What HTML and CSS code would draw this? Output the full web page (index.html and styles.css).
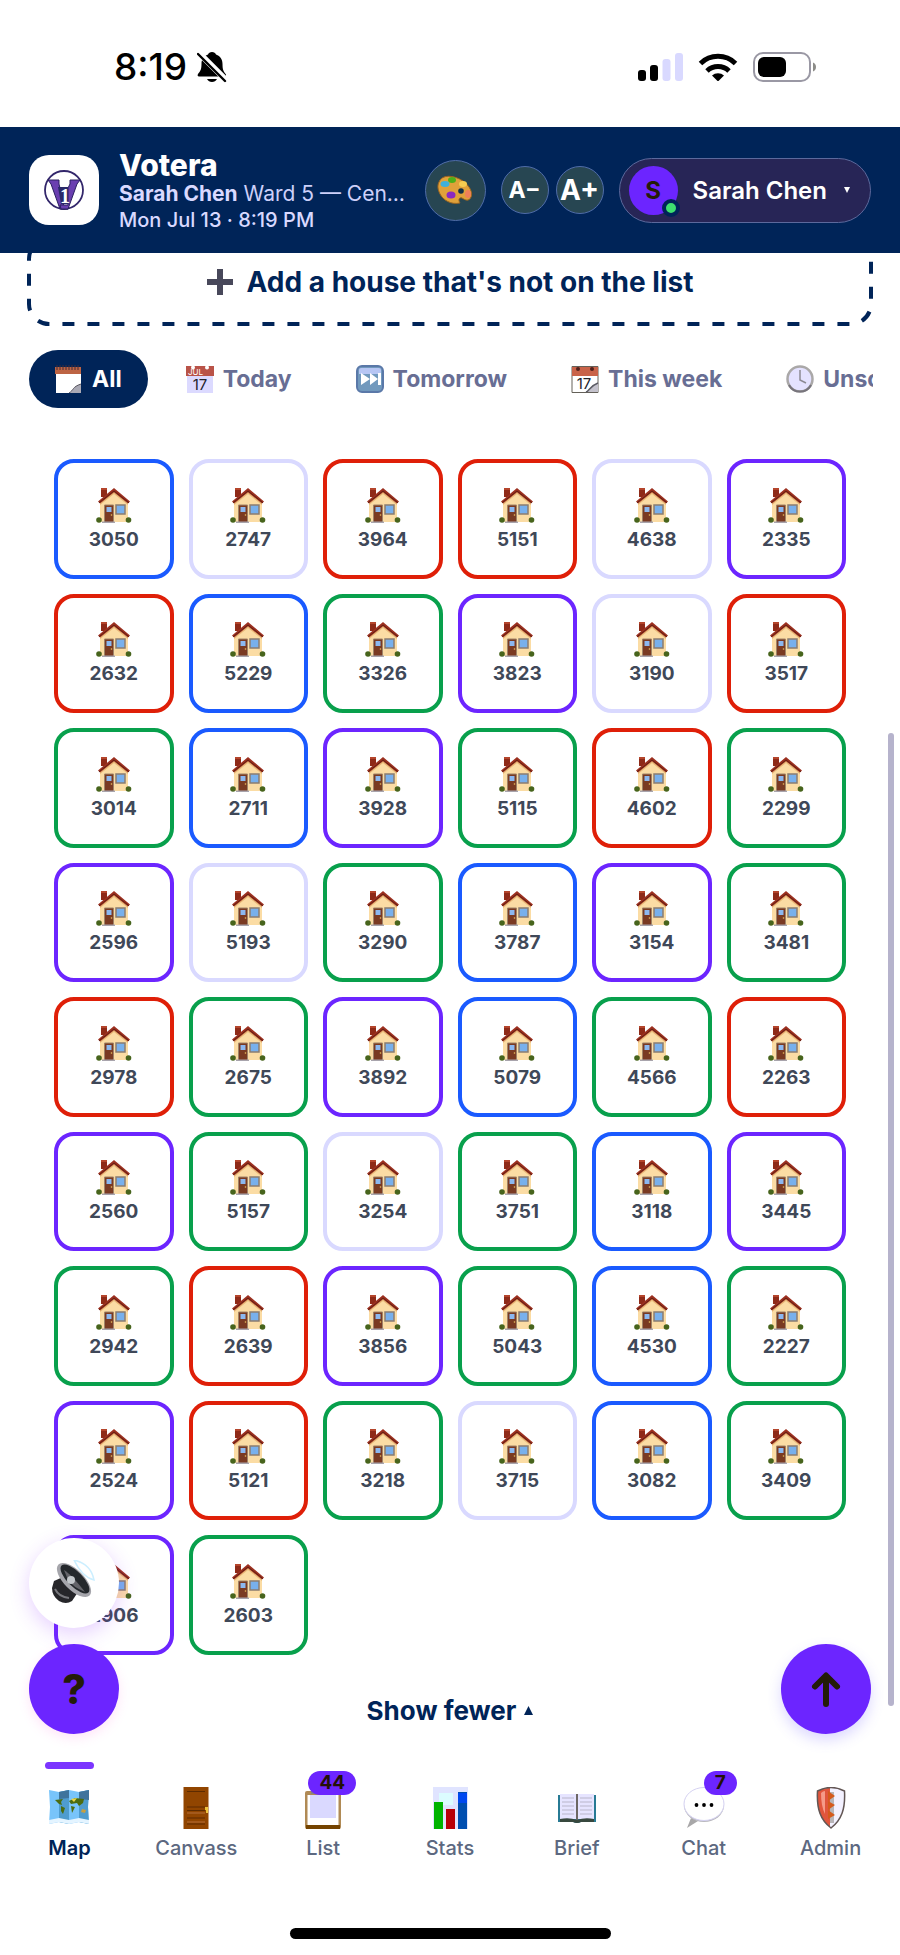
FILE: index.html
```html
<!DOCTYPE html>
<html lang="en">
<head>
<meta charset="utf-8">
<meta name="viewport" content="width=device-width, initial-scale=1">
<title>Votera</title>
<link rel="stylesheet" href="styles.css">
</head>
<body>
<svg class="sprite" aria-hidden="true">
  <symbol id="house" viewBox="0 0 36 36">
    <path d="M5 1h6v9H5z" fill="#8e2a18"/><path d="M5 1h6v2H5z" fill="#b4452c"/>
    <path d="M4 15 18 3l14 12v20H4z" fill="#fbdca4"/>
    <path d="M4 15 18 3l14 12v3L18 7 4 18z" fill="#e8b878"/>
    <path d="M2 14.500 18 1l16 13.500-2 2L18 5.200 4 16.500z" fill="#9c3020"/>
    <path d="M3 15.800 18 4l15 11.800" fill="none" stroke="#642012" stroke-width="1"/>
    <path d="M9 18h8v17H9z" fill="#7a3a22"/><path d="M8.500 35V18h9v17" fill="none" stroke="#a08468"/>
    <path d="M10.500 20h5v5h-5z" fill="#8cb8f0"/><circle cx="15.500" cy="28" r=".8" fill="#e8c060"/>
    <path d="M20 18h9v9h-9z" fill="#78b0ec" stroke="#8a7c70" stroke-width="1.500"/>
    <path d="M6 34.500h13V36H6z" fill="#a8a4ac"/>
    <circle cx="3" cy="33" r="2.800" fill="#47641c"/><circle cx="32.500" cy="33" r="2.800" fill="#47641c"/>
  </symbol>
</svg>

<div class="statusbar">
  <div class="status-left">
    <span class="clock">8:19</span>
    <svg width="30" height="32" viewBox="0 0 30 32" aria-label="Silent mode">
      <path d="M15 1c-2 0-3.500 1-4 2.500C6.500 5 4.500 8.500 4.500 13c0 6-1.500 7.500-3.500 10-.8 1.200-.3 2.500 1 2.500h26c1 0 1.500-1.500.6-2.500-2-2.500-3.100-4-3.100-10 0-4.500-2-8-6.500-9.500C18.500 2 17 1 15 1zM10 28h10c-1 2-2.800 3-5 3s-4-1-5-3z"/>
      <path d="M1 1l29 29" stroke="#fff" stroke-width="6"/><path d="M1 3l27 27" stroke="#000" stroke-width="2.400" stroke-linecap="round"/>
    </svg>
  </div>
  <div class="status-right">
    <svg width="46" height="28" viewBox="0 0 46 28" aria-label="Signal">
      <rect x="1" y="17" width="8" height="11" rx="3"/><rect x="13" y="12" width="8" height="16" rx="3"/>
      <g fill="#d9d9ff"><rect x="25.500" y="6" width="8" height="22" rx="3"/><rect x="38" y="0" width="8" height="28" rx="3"/></g>
    </svg>
    <svg width="40" height="28" viewBox="0 0 40 28" aria-label="Wi-Fi">
      <g fill="none" stroke="#000" stroke-width="5"><path d="M2.500 10.500a25 25 0 0 1 35 0"/><path d="M9 18a16 16 0 0 1 22 0"/></g>
      <path d="M14 22.500a9 9 0 0 1 12 0L20 28.500z"/>
    </svg>
    <svg width="64" height="30" viewBox="0 0 64 30" aria-label="Battery">
      <rect x="1" y="1" width="56" height="28" rx="9" fill="none" stroke="#9a98a4" stroke-width="2"/>
      <rect x="5" y="5" width="28" height="20" rx="6"/><path d="M60 10.500c4 1 4 8 0 9z" fill="#8c8c88"/>
    </svg>
  </div>
</div>

<header class="topbar">
  <div class="logo">
    <svg width="70" height="70" viewBox="0 0 70 70" role="img" aria-label="Votera logo">
      <circle cx="35" cy="35" r="19" fill="#fff" stroke="#33276b" stroke-width="1.800"/>
      <path d="M19 25h11v4l4 17 1 6h5l-1 2h-8L22 29z" fill="#6a3fb0" stroke="#2a2060"/>
      <path d="M51 25H41v4l-2 4v17h-8l1 4h7l9-25z" fill="#6a3fb0" stroke="#2a2060"/>
      <path d="M29 32h10v17h-7z" fill="#2a2a68"/>
      <text x="36" y="48" text-anchor="middle" class="logo-mark">1</text>
    </svg>
  </div>
  <div class="brand">
    <h1>Votera</h1>
    <p class="who"><strong>Sarah Chen</strong> Ward 5 — Cen…</p>
    <p class="when">Mon Jul 13 · 8:19 PM</p>
  </div>
  <button class="round palette" aria-label="Theme">
    <svg width="36" height="30" viewBox="0 0 36 30">
      <path d="M2 7C5-1 17 0 26 6c7 5 10 12 8 16-2 5-6 3-9 1-3-1-4 2-2 5-9 2-17-3-20-9C1 15 0 11 2 7z" fill="#e0a13a" stroke="#9a6420"/>
      <ellipse cx="15" cy="5" rx="4" ry="3" fill="#4caf1a"/><ellipse cx="8" cy="9" rx="4.500" ry="3" fill="#3fb0dc"/>
      <ellipse cx="14" cy="20" rx="4.500" ry="3.500" fill="#8a28c0"/><ellipse cx="26" cy="9" rx="4" ry="3" fill="#f5cc50"/>
      <ellipse cx="31" cy="19" rx="3" ry="4" fill="#f08058"/><circle cx="24" cy="16" r="2.800" fill="#123047"/>
    </svg>
  </button>
  <div class="sizes">
    <button class="round small" aria-label="Smaller text">A−</button>
    <button class="round large" aria-label="Larger text">A+</button>
  </div>
  <button class="profile">
    <span class="avatar">S<i class="online"></i></span>
    <span>Sarah Chen</span>
    <svg class="caret" width="6" height="6" viewBox="0 0 6 6"><path d="M0 0h6L3 6z" fill="#fff"/></svg>
  </button>
</header>

<main>
  <div class="add-wrap">
    <button class="add">
      <svg class="dashes" aria-hidden="true"><rect class="dash-rect" x="2" y="2" rx="20"/></svg>
      <svg width="26" height="26" viewBox="0 0 26 26"><path d="M10 0h6v10h10v6H16v10h-6V16H0v-6h10z" fill="#48485a"/></svg>
      <span>Add a house that's not on the list</span>
    </button>
  </div>

  <div class="chips">
    <button class="chip active">
      <svg width="28" height="28" viewBox="0 0 28 28"><path d="M1 6h25v22H1z" fill="#fff"/><path d="M0 2h26v7H0z" fill="#bd6444"/><path d="M2 0v5M5 0v5M8 0v5M11 0v5M14 0v5M17 0v5M20 0v5M23 0v5" stroke="#442c34"/><path d="M14 28c5-3 3-6 12-9v9z" fill="#aaa9b4"/><path d="M14 28c5-3 3-6 12-9" stroke="#55525c" fill="none"/></svg>
      All</button>
    <button class="chip">
      <svg width="28" height="28" viewBox="0 0 28 28"><path d="M1 10h26v18H1z" fill="#dcdaff"/><path d="M0 1h28v10H0z" fill="#b95348"/><circle cx="7" cy="2.500" r="2" fill="#fff"/><circle cx="21" cy="2.500" r="2" fill="#fff"/><text x="2" y="10" class="cal-month">JUL</text><text x="14" y="25" class="cal-day">17</text></svg>
      Today</button>
    <button class="chip">
      <svg width="28" height="28" viewBox="0 0 28 28"><rect x="1" y="1" width="26" height="26" rx="5" fill="#7199bd" stroke="#5a78a8" stroke-width="2"/><path d="M3 5q0-2 2-2h18q2 0 2 2v4H3z" fill="#b7c6f4"/><path d="M5 8l9 6V8l8 6V8h3v12h-3v-6l-8 6v-6l-9 6z" fill="#fff"/></svg>
      Tomorrow</button>
    <button class="chip">
      <svg width="28" height="28" viewBox="0 0 28 28"><path d="M1 1.500h26v26H1z" fill="#fff" stroke="#646058"/><path d="M1 2h26v9H1z" fill="#c96349"/><circle cx="7" cy="4" r="2" fill="#50201c"/><circle cx="21" cy="4" r="2" fill="#50201c"/><text x="13" y="24" class="cal-day">17</text><path d="M15 27c3-1 4-6 12-9v9z" fill="#c4c2cc"/><path d="M15 27c3-1 4-6 12-9" fill="none" stroke="#5c5c64" stroke-width="1.500"/></svg>
      This week</button>
    <button class="chip">
      <svg width="28" height="28" viewBox="0 0 28 28"><circle cx="14" cy="14" r="12.500" fill="#e4e2ff" stroke="#aaa8a8" stroke-width="2.500"/><path d="M3 20a12.500 12.500 0 0 0 22 0" fill="none" stroke="#77747c" stroke-width="2"/><path d="M14 5v10l6 3" fill="none" stroke="#8c8a94" stroke-width="1.500"/></svg>
      Unscheduled</button>
  </div>

  <div class="houses" id="houses"></div>
  <button class="fewer">Show fewer <svg width="9" height="9" viewBox="0 0 9 9"><path d="M4.500 0 9 9H0z" fill="#002458"/></svg></button>
</main>

<nav class="tabs" aria-label="Main">
  <a class="tab current" href="#map">
    <svg width="42" height="42" viewBox="0 0 42 42"><path d="M1 3l10 2 10-2 10 2 10-2-1 17 1 17-10-2-10 2-10-2-10 2 1-17z" fill="#78c4fa"/><path d="M11 5l10-2v34l-10-2zM31 5l10-2-1 17 1 17-10-2z" fill="#4f9cce"/><path d="M11 5l10-2v8l-10 1zM31 5l10-2v10l-10-1z" fill="#3f749c"/><path d="M1 33l10-2 10 2 10-2 10 2v4l-10-2-10 2-10-2-10 2z" fill="#e4f4ff"/><path d="M7 13l8-1-2 3 1 3-3-1zM13 19l4 2-2 6-2-3zM21 14l6-3 9 1-1 4-4 3-2-3-6 1zM23 19l4 1-3 6z" fill="#4c6c10"/><path d="M23 12l6-1-3 4z" fill="#e9d548"/><path d="M34 22l4 1-1 3-4-1z" fill="#c8a040"/></svg>
    <span>Map</span></a>
  <a class="tab" href="#canvass">
    <svg width="42" height="42" viewBox="0 0 42 42"><path d="M8.500 0h25v42h-25z" fill="#914500"/><path d="M12 4.500h18M12 20h18M12 23.500h18M12 31h18M12 37h18" stroke="#5e2b00" stroke-width="1.200"/><path d="M12 26h18M12 35h18" stroke="#b66e38"/><path d="M30 20h3v6h-2v-3h-1z" fill="#ecc33e"/></svg>
    <span>Canvass</span></a>
  <a class="tab" href="#list">
    <svg width="42" height="42" viewBox="0 0 42 42"><path d="M5 4h32q2 0 2 2v34q0 2-2 2H5q-2 0-2-2V6q0-2 2-2z" fill="#b08a55"/><path d="M5.500 8h31v30h-31z" fill="#fff"/><path d="M8 8h26v23H8z" fill="#dad9ff"/><path d="M4 38h34v4H4z" fill="#744300"/><path d="M9 2h24v5H9z" fill="#85837f"/></svg>
    <span>List</span><b class="badge">44</b></a>
  <a class="tab" href="#stats">
    <svg width="42" height="42" viewBox="0 0 42 42"><path d="M4 0h35v42H4z" fill="#e0e4ff"/><path d="M10 6h14v12H10z" fill="#dcfcff"/><path d="M5 15h9v27H5z" fill="#00b300"/><path d="M17 22h9v20h-9z" fill="#b80008"/><path d="M29 5h9v37h-9z" fill="#004eb0"/><path d="M29 6h9v10h-9z" fill="#0048f0"/></svg>
    <span>Stats</span></a>
  <a class="tab" href="#brief">
    <svg width="42" height="42" viewBox="0 0 42 42"><path d="M2 8h38v27H25q-4 2-8 0H2z" fill="#277a94"/><path d="M4 7h16v25H4zM22 7h16v25H22z" fill="#e6e4ff"/><path d="M6 11h12M6 15h12M6 19h12M6 23h12M6 27h12M24 11h12M24 15h12M24 19h12M24 23h12M24 27h12" stroke="#b9b6ca"/><path d="M21 7v26" stroke="#6d6864" stroke-width="2"/><path d="M4 32q9-2 17 1 8-3 17-1v3H25q-4 2-8 0H4z" fill="#38483e"/></svg>
    <span>Brief</span></a>
  <a class="tab" href="#chat">
    <svg width="42" height="42" viewBox="0 0 42 42"><path d="M8 31l-4 10 11-7z" fill="#a8a7a8"/><ellipse cx="21" cy="18.500" rx="20" ry="16.500" fill="#b9b8be"/><ellipse cx="21" cy="17" rx="20" ry="16.500" fill="#fff" stroke="#d5d2f2"/><circle cx="13.500" cy="18" r="1.900"/><circle cx="21" cy="18" r="1.900"/><circle cx="28.500" cy="18" r="1.900"/></svg>
    <span>Chat</span><b class="badge">7</b></a>
  <a class="tab" href="#admin">
    <svg width="42" height="42" viewBox="0 0 42 42"><path d="M7.500 4Q21-3 34.500 4c1 18-3 29-13.500 37C10.500 33 6.500 22 7.500 4z" fill="#f3f1ff"/><path d="M7.500 4Q14 .5 20 1v39C10.500 33 6.500 22 7.500 4z" fill="#e0553c"/><path d="M11 6q2-2 4-2v23q-4-8-4-21z" fill="#f59a88"/><path d="M20 5h4v31h-4z" fill="#b8b5b8"/><path d="M18 4l7 5-7 5zM18 14l7 4-7 5zM18 23l7 5-7 4z" fill="#d45a1c"/><path d="M7.500 4Q21-3 34.500 4c1 18-3 29-13.500 37C10.500 33 6.500 22 7.500 4z" fill="none" stroke="#625654" stroke-width="1.500"/></svg>
    <span>Admin</span></a>
</nav>
<div class="home-indicator"></div>

<div class="fabs-left">
  <button class="fab sound" aria-label="Read aloud">
    <svg width="46" height="46" viewBox="0 0 46 46"><path d="M3 21l9-4 15 15-6 9q-6 4-13 0Q1 36 1 28z" fill="#26262a"/><path d="M4 29q4 8 14 9" stroke="#77777c" stroke-width="2" fill="none"/><ellipse cx="23" cy="20" rx="22" ry="10" transform="rotate(45 23 20)" fill="#a5a5ab"/><ellipse cx="24" cy="19" rx="19" ry="7.500" transform="rotate(45 24 19)" fill="#24282c"/><path d="M13 10q7 4 21 22-12-5-17-12z" fill="#64646a"/><circle cx="20" cy="20" r="4" fill="#c4c8cc"/><path d="M23 0q17 4 20 20-12-3-20-20z" stroke="#ccefff" stroke-width="1.500" fill="none"/></svg>
  </button>
  <button class="fab help" aria-label="Help">?</button>
</div>
<button class="fab to-top" aria-label="Back to top">
  <svg width="32" height="36" viewBox="0 0 32 36"><path d="M16 33V5M5 15.500 16 4.500l11 11" fill="none" stroke="#241c08" stroke-width="6" stroke-linecap="round" stroke-linejoin="round"/></svg>
</button>
<div class="scroll-thumb"></div>
<script src="app.js"></script>
</body>
</html>
```

FILE: styles.css
```css
* { box-sizing: border-box; }
body {
  margin: 0;
  position: relative;
  min-height: 100vh;
  display: flex;
  flex-direction: column;
  background: #fff;
  color: #002458;
  font-family: Inter, "Noto Sans", sans-serif;
}
button { font: inherit; color: inherit; border: 0; padding: 0; background: none; cursor: pointer; }
svg { display: block; flex: none; }
h1, p { margin: 0; }
.sprite { position: absolute; width: 0; height: 0; }

.statusbar { display: flex; justify-content: space-between; align-items: center; height: 127px; padding: 6px 83px 0 114px; color: #000; }
.status-left { display: flex; align-items: center; gap: 10px; }
.clock { font-size: 37px; font-weight: 500; line-height: 44px; }
.status-right { display: flex; align-items: center; gap: 15px; }

.topbar { position: relative; z-index: 1; display: flex; align-items: center; min-height: 126px; padding: 0 29px; background: #002458; color: #fff; }
.logo { flex: none; border-radius: 20px; background: #fff; overflow: hidden; }
.logo-mark { font: bold 20px "Liberation Serif", serif; fill: #fff; }
.brand { flex: 1; min-width: 0; margin: 0 8px 0 20px; padding-top: 4px; }
.brand h1 { font-size: 30px; line-height: 30px; font-weight: 800; }
.who { font-size: 21px; line-height: 27px; color: #cdd0fa; white-space: nowrap; overflow: hidden; text-overflow: ellipsis; }
.who strong { font-weight: 700; color: #d9d9ff; }
.when { font-size: 20px; line-height: 27px; font-weight: 500; color: #d9d9ff; }
.round { display: flex; align-items: center; justify-content: center; flex: none; border: 1px solid #4f6ca8; border-radius: 50%; background: #274652; font-weight: 700; }
.palette { width: 61px; height: 61px; }
.sizes { display: flex; gap: 7px; margin: 0 15px; }
.small, .large { width: 48px; height: 48px; }
.small { font-size: 23px; }
.large { font-size: 28px; }
.profile { display: flex; align-items: center; flex: none; height: 65px; padding: 0 20px 0 9px; border: 1px solid #5c699c; border-radius: 33px; background: #272556; color: #fff; font-size: 24px; font-weight: 600; }
.avatar { position: relative; display: grid; place-items: center; width: 49px; height: 49px; margin-right: 15px; border-radius: 50%; background: #6c25ff; color: #241c08; font-weight: 700; }
.online { position: absolute; right: -2px; bottom: -2px; width: 18px; height: 18px; border: 4px solid #002458; border-radius: 50%; background: #3ee070; }
.caret { margin-left: 17px; }

main { flex: 1; }
.add-wrap { padding: 0 27px; overflow: hidden; }
.add { position: relative; display: flex; align-items: center; justify-content: center; gap: 14px; width: 100%; height: 89px; margin-top: -16px; font-size: 28px; font-weight: 700; }
.dashes { position: absolute; inset: 0; width: 100%; height: 100%; }
.dash-rect { width: calc(100% - 4px); height: calc(100% - 4px); fill: none; stroke: #002458; stroke-width: 4; stroke-dasharray: 12 13; stroke-dashoffset: 14; }
.chips { display: flex; gap: 12px; margin: 24px 27px 0 29px; overflow: hidden; }
.chip { display: flex; align-items: center; flex: none; gap: 9px; height: 58px; padding: 0 26px; border-radius: 29px; color: #686e94; font-size: 23px; font-weight: 700; }
.chip.active { background: #002458; color: #fff; }
.cal-month { font: 8px Inter, sans-serif; fill: #fff; }
.cal-day { font: 15px Inter, sans-serif; fill: #24242c; text-anchor: middle; }

.houses { display: grid; grid-template-columns: repeat(6, 1fr); gap: 15px; padding: 51px 54px 0; }
.house { display: flex; flex-direction: column; align-items: center; justify-content: center; gap: 6px; aspect-ratio: 1; border: 4px solid #d9d9ff; border-radius: 20px; background: #fff; color: #3f4858; font-size: 19px; line-height: 22px; font-weight: 700; }
.house.blue { border-color: #1a5aff; }
.house.red { border-color: #df1f08; }
.house.green { border-color: #08a04c; }
.house.purple { border-color: #6c25ff; }
.fewer { display: flex; align-items: center; gap: 8px; margin: 40px auto 0; font-size: 26px; line-height: 32px; font-weight: 700; }

.tabs { display: grid; grid-template-columns: repeat(7, 1fr); padding: 25px 6px 0; }
.tab { position: relative; display: flex; flex-direction: column; align-items: center; gap: 6px; color: #5c6880; font-size: 20px; line-height: 26px; font-weight: 500; text-decoration: none; }
.tab.current { color: #002458; font-weight: 600; }
.tab.current::before { content: ""; position: absolute; top: -25px; width: 49px; height: 7px; border-radius: 4px; background: #7c35ff; }
.badge { position: absolute; top: -16px; right: calc(50% - 33px); min-width: 32px; height: 24px; padding: 0 11px; border-radius: 12px; background: #6c25ff; color: #241008; font-size: 19px; line-height: 24px; font-weight: 700; }
.home-indicator { width: 36%; max-width: 321px; height: 11px; margin: 67px auto 16px; border-radius: 6px; background: #000; }

.fabs-left { position: absolute; left: 29px; bottom: 221px; display: grid; gap: 16px; }
.fab { display: grid; place-items: center; width: 90px; height: 90px; border-radius: 50%; background: #6c25ff; color: #241c08; font-size: 41px; font-weight: 800; }
.fab.sound { background: #fff; box-shadow: 0 6px 20px rgba(150, 60, 255, .24); }
.fab.help { box-shadow: 0 4px 12px rgba(255, 120, 220, .2); }
.fab.to-top { position: absolute; right: 29px; bottom: 221px; box-shadow: 0 6px 14px rgba(108, 90, 255, .24); }
.scroll-thumb { position: absolute; top: 733px; right: 6px; width: 6px; height: 973px; border-radius: 3px; background: #b6b3cc; }
```

FILE: app.js
```js
const houses = [
  ["3050", "blue"], ["2747", ""], ["3964", "red"], ["5151", "red"], ["4638", ""], ["2335", "purple"],
  ["2632", "red"], ["5229", "blue"], ["3326", "green"], ["3823", "purple"], ["3190", ""], ["3517", "red"],
  ["3014", "green"], ["2711", "blue"], ["3928", "purple"], ["5115", "green"], ["4602", "red"], ["2299", "green"],
  ["2596", "purple"], ["5193", ""], ["3290", "green"], ["3787", "blue"], ["3154", "purple"], ["3481", "green"],
  ["2978", "red"], ["2675", "green"], ["3892", "purple"], ["5079", "blue"], ["4566", "green"], ["2263", "red"],
  ["2560", "purple"], ["5157", "green"], ["3254", ""], ["3751", "green"], ["3118", "blue"], ["3445", "purple"],
  ["2942", "green"], ["2639", "red"], ["3856", "purple"], ["5043", "green"], ["4530", "blue"], ["2227", "green"],
  ["2524", "purple"], ["5121", "red"], ["3218", "green"], ["3715", ""], ["3082", "blue"], ["3409", "green"],
  ["2906", "purple"], ["2603", "green"]
];
document.getElementById("houses").innerHTML = houses.map(([number, status]) =>
  `<button class="house ${status}"><svg width="36" height="36"><use href="#house"/></svg><span>${number}</span></button>`
).join("");
```
